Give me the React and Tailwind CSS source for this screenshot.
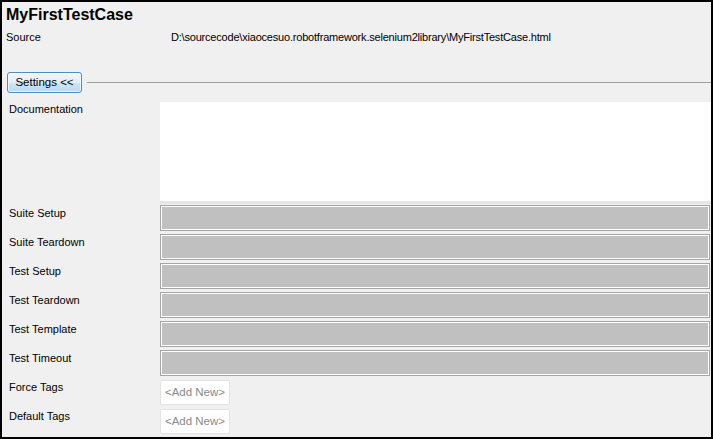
import React from 'react';

const fields = ['Suite Setup', 'Suite Teardown', 'Test Setup', 'Test Teardown', 'Test Template', 'Test Timeout'];
const tags = ['Force Tags', 'Default Tags'];

const App = () => {
    return (
        <div className="w-[713px] h-[439px] bg-[#f0f0f0] border-2 border-black overflow-hidden text-[11px] leading-[13px] text-black" style={{ fontFamily: '"Liberation Sans", Arial, sans-serif' }}>
            {/* Header */}
            <div className="pl-[4px] pt-[4px]">
                <h1 className="text-[16px] font-bold leading-[18px]">MyFirstTestCase</h1>
                <div className="flex mt-[7px]">
                    <span className="w-[165px]">Source</span>
                    <span className="tracking-[-0.2px]">D:\sourcecode\xiaocesuo.robotframework.selenium2library\MyFirstTestCase.html</span>
                </div>
            </div>

            {/* Settings toggle */}
            <div className="flex items-center mt-[28px] pl-[5px]">
                <button className="w-[75px] h-[21px] rounded-[3px] border border-[#4f8dbd] bg-[linear-gradient(to_bottom,#f0f7fc_0%,#e0eef8_50%,#cfe5f5_51%,#bcdaf0_100%)] text-[11.5px] leading-none shadow-[inset_0_0_0_1px_#ffffffaa]">
                    Settings &lt;&lt;
                </button>
                <div className="flex-1 h-px bg-[#a0a0a0] ml-[5px]" />
            </div>

            {/* Settings grid */}
            <div className="mt-[9px]">
                <div className="flex">
                    <div className="w-[158px] pl-[7px] pt-[1px]">Documentation</div>
                    <div className="flex-1 h-[99px] bg-white" />
                </div>
                <div className="flex">
                    <div className="w-[158px]" />
                    <div className="flex-1 h-[3px] bg-[#e6e6e6]" />
                </div>
                {fields.map((f) => (
                    <div key={f} className="flex h-[29px]">
                        <div className="w-[158px] pl-[7px] pt-[3px]">{f}</div>
                        <div className="flex-1 h-[26px] mt-[1px] border border-[#a5a5a5] mr-[1px]">
                            <div className="h-full border border-white bg-[#c0c0c0]" />
                        </div>
                    </div>
                ))}
                {tags.map((t) => (
                    <div key={t} className="flex h-[29px]">
                        <div className="w-[158px] pl-[7px] pt-[3px]">{t}</div>
                        <div className="w-[70px] h-[25px] mt-[2px] bg-white border border-[#e3e3e3] rounded-[2px] flex items-center justify-center text-[11.5px] text-[#8a8a8a]">
                            &lt;Add New&gt;
                        </div>
                    </div>
                ))}
            </div>
        </div>
    );
};

export default App;
